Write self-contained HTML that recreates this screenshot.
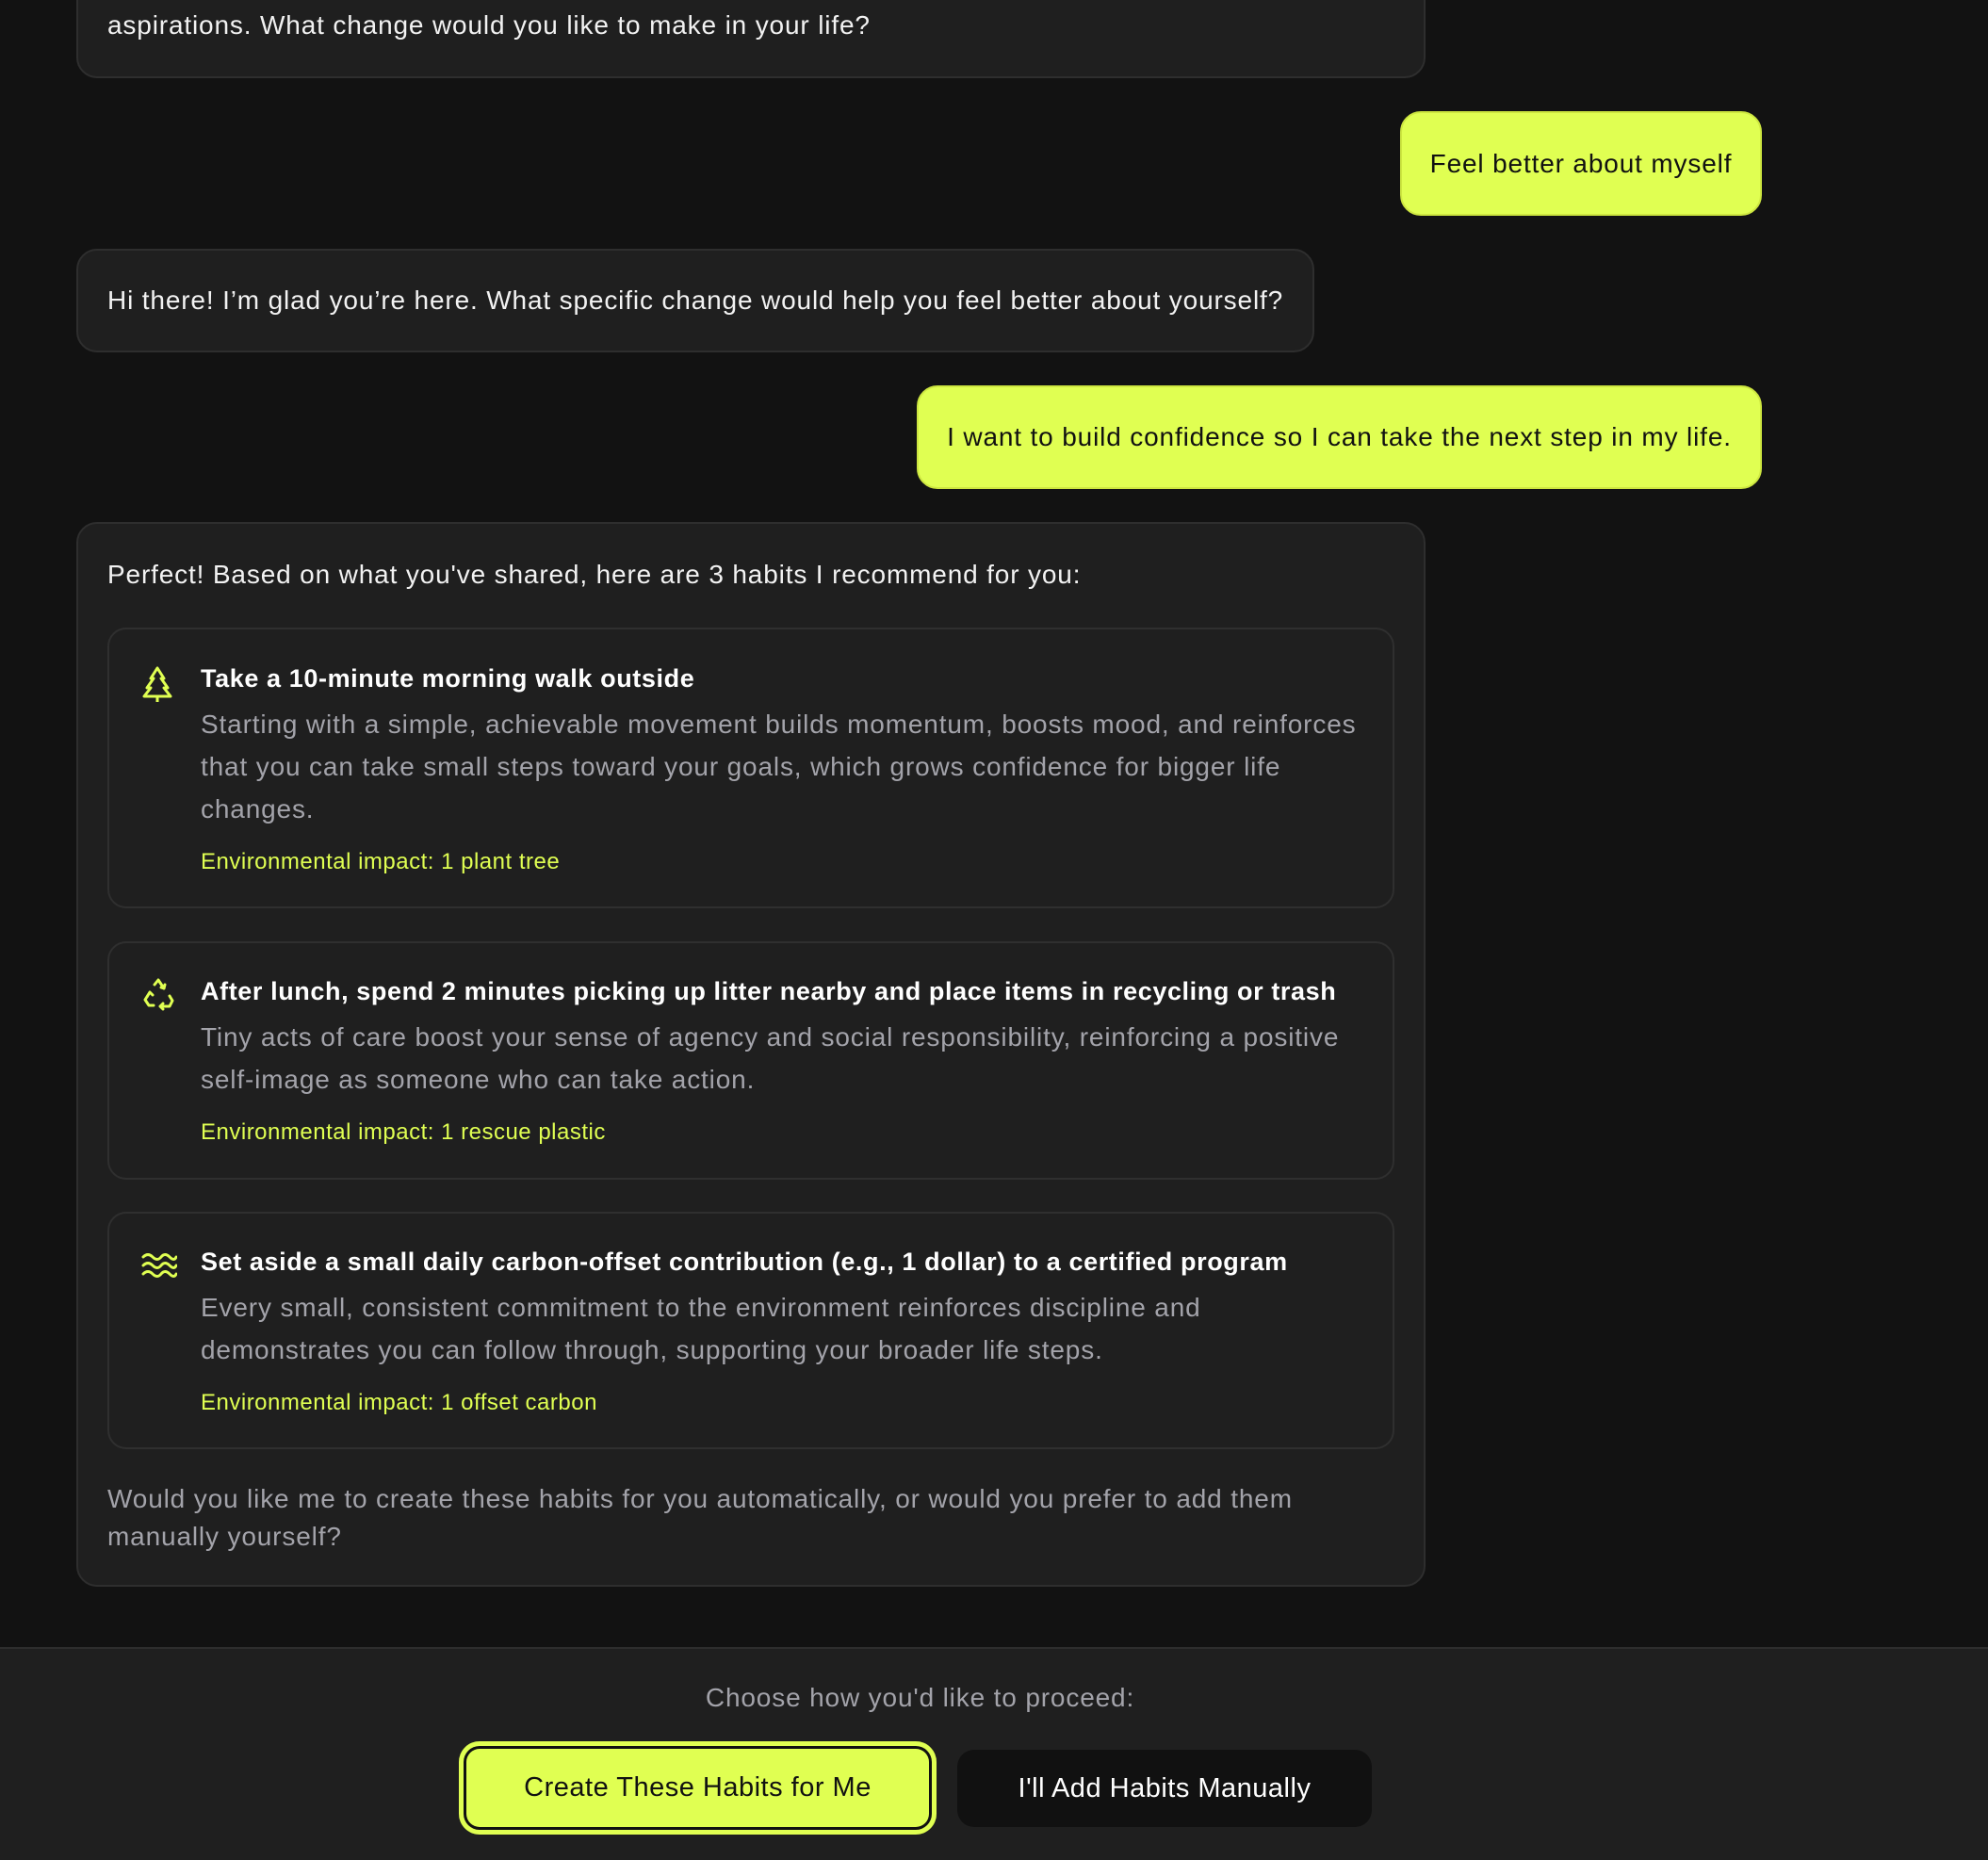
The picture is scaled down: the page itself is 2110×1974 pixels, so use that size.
<!DOCTYPE html>
<html><head><meta charset="utf-8"><style>
*{box-sizing:border-box;margin:0;padding:0}
body{width:2110px;height:1974px;background:#121212;font-family:"Liberation Sans",sans-serif;color:#f2f2f2;position:relative;overflow:hidden;font-size:28px;letter-spacing:0.85px}
.b{position:absolute;background:#1f1f1f;border:2px solid #2e2e2e;border-radius:22px}
.u{position:absolute;background:#e0ff52;border-radius:22px;color:#111;display:flex;align-items:center;justify-content:center;border:2px solid #cde640}
.t{position:absolute;white-space:nowrap}
.h{position:absolute;left:114px;width:1366px;background:#1f1f1f;border:2px solid #2f2f2f;border-radius:20px}
.h .ti{position:absolute;left:97px;font-weight:bold;color:#fff;font-size:27px;letter-spacing:0.6px}
.h .d{position:absolute;left:97px;color:#a3a3aa;line-height:45px;width:1250px}
.h .i{position:absolute;left:97px;color:#e0ff52;font-size:24px;letter-spacing:0.5px}
.h svg{position:absolute;left:34px}
</style></head><body>
<div class="b" style="left:81px;top:-30px;width:1432px;height:113px"></div>
<div class="t" style="left:114px;top:11px">aspirations. What change would you like to make in your life?</div>
<div class="u" style="left:1486px;top:118px;width:384px;height:111px">Feel better about myself</div>
<div class="b" style="left:81px;top:264px;width:1314px;height:110px"></div>
<div class="t" style="left:114px;top:303px">Hi there! I’m glad you’re here. What specific change would help you feel better about yourself?</div>
<div class="u" style="left:973px;top:409px;width:897px;height:110px">I want to build confidence so I can take the next step in my life.</div>
<div class="b" style="left:81px;top:554px;width:1432px;height:1130px"></div>
<div class="t" style="left:114px;top:594px">Perfect! Based on what you've shared, here are 3 habits I recommend for you:</div>
<div class="h" style="top:666px;height:298px">
<svg style="top:38px" width="34" height="40" viewBox="0 0 34 40" fill="none" stroke="#e0ff52" stroke-width="3" stroke-linejoin="round"><path d="M17 3 L10 14 H13 L6 24 H10 L3 33 H31 L24 24 H28 L21 14 H24 Z M17 33 V39"/></svg>
<div class="ti" style="top:37px">Take a 10-minute morning walk outside</div>
<div class="d" style="top:78px">Starting with a simple, achievable movement builds momentum, boosts mood, and reinforces that you can take small steps toward your goals, which grows confidence for bigger life changes.</div>
<div class="i" style="top:233px">Environmental impact: 1 plant tree</div></div>
<div class="h" style="top:999px;height:253px">
<svg style="top:36px" width="36" height="36" viewBox="0 0 36 36" fill="none" stroke="#e0ff52" stroke-width="3" stroke-linecap="round" stroke-linejoin="round"><path d="M14 8 L18 3 L24 12 M21 11 L24 12 L25 8 M9 16 L4 24 L8 30 H13 M6 21 L9 16 L12 19 M20 31 H30 L33 25 L30 20 M23 28 L20 31 L23 34"/></svg>
<div class="ti" style="top:36px">After lunch, spend 2 minutes picking up litter nearby and place items in recycling or trash</div>
<div class="d" style="top:77px">Tiny acts of care boost your sense of agency and social responsibility, reinforcing a positive self-image as someone who can take action.</div>
<div class="i" style="top:187px">Environmental impact: 1 rescue plastic</div></div>
<div class="h" style="top:1286px;height:252px">
<svg style="top:40px" width="38" height="30" viewBox="0 0 38 30" fill="none" stroke="#e0ff52" stroke-width="3" stroke-linecap="round"><path d="M2 6 Q7 1 12 6 T21 6 T30 6 T37 6 M2 15 Q7 10 12 15 T21 15 T30 15 T37 15 M2 24 Q7 19 12 24 T21 24 T30 24 T37 24"/></svg>
<div class="ti" style="top:36px">Set aside a small daily carbon-offset contribution (e.g., 1 dollar) to a certified program</div>
<div class="d" style="top:77px">Every small, consistent commitment to the environment reinforces discipline and demonstrates you can follow through, supporting your broader life steps.</div>
<div class="i" style="top:187px">Environmental impact: 1 offset carbon</div></div>
<div class="t" style="left:114px;top:1571px;color:#a3a3aa;line-height:40px;white-space:normal;width:1360px">Would you like me to create these habits for you automatically, or would you prefer to add them manually yourself?</div>
<div style="position:absolute;left:0;top:1748px;width:2110px;height:226px;background:#1f1f1f;border-top:2px solid #2e2e2e"></div>
<div class="t" style="left:0;width:1953px;text-align:center;top:1786px;color:#a3a3aa">Choose how you'd like to proceed:</div>
<div style="position:absolute;left:487px;top:1848px;width:507px;height:99px;background:#e0ff52;border-radius:22px;box-shadow:inset 0 0 0 5px #e0ff52,inset 0 0 0 8px #111;display:flex;align-items:center;justify-content:center;color:#111;font-size:29px;letter-spacing:0.5px">Create These Habits for Me</div>
<div style="position:absolute;left:1016px;top:1857px;width:440px;height:82px;background:#111;border-radius:18px;display:flex;align-items:center;justify-content:center;color:#fff;font-size:29px;letter-spacing:0.5px">I'll Add Habits Manually</div>
</body></html>
